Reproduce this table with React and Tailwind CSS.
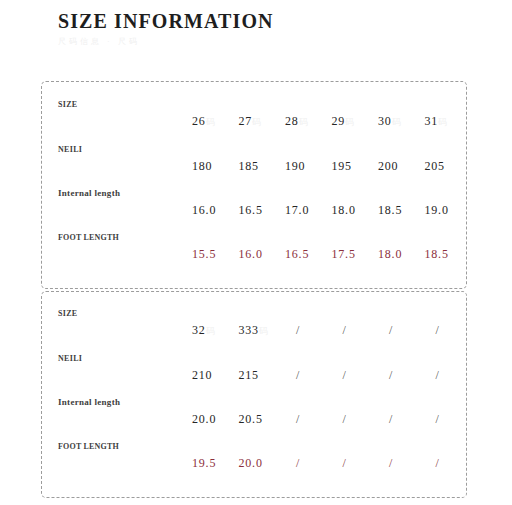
import React from "react";

const serif = { fontFamily: '"Liberation Serif", "Times New Roman", serif' };

const box1 = [
  { label: "SIZE", cls: "text-[8px] tracking-[0.3px]", vals: ["26", "27", "28", "29", "30", "31"], ghost: true },
  { label: "NEILI", cls: "text-[8px] tracking-[0.3px]", vals: ["180", "185", "190", "195", "200", "205"] },
  { label: "Internal length", cls: "text-[9px] tracking-[0.3px]", vals: ["16.0", "16.5", "17.0", "18.0", "18.5", "19.0"] },
  { label: "FOOT LENGTH", cls: "text-[8px] tracking-[0.2px]", vals: ["15.5", "16.0", "16.5", "17.5", "18.0", "18.5"], red: true },
];

const box2 = [
  { label: "SIZE", cls: "text-[8px] tracking-[0.3px]", vals: ["32", "333", "/", "/", "/", "/"], ghost: true },
  { label: "NEILI", cls: "text-[8px] tracking-[0.3px]", vals: ["210", "215", "/", "/", "/", "/"] },
  { label: "Internal length", cls: "text-[9px] tracking-[0.3px]", vals: ["20.0", "20.5", "/", "/", "/", "/"] },
  { label: "FOOT LENGTH", cls: "text-[8px] tracking-[0.2px]", vals: ["19.5", "20.0", "/", "/", "/", "/"], red: true },
];

function Row({ row, last }) {
  return (
    <div className={last ? "" : "mb-[10px]"}>
      <div className={`leading-[17px] font-bold text-[#404040] ${row.cls}`}>{row.label}</div>
      <div className="grid grid-cols-[repeat(6,46.5px)] pl-[134px] leading-[17px] text-[12px] tracking-[0.8px]">
        {row.vals.map((v, i) =>
          v === "/" ? (
            <span key={i} className={`pl-[11px] ${row.red ? "text-[#8a3a46]" : "text-[#555]"}`}>/</span>
          ) : (
            <span key={i} className={row.red ? "text-[#8c2f3c]" : "text-[#262626]"}>
              {v}
              {row.ghost && <span className="text-[#efefef] text-[9px]">码</span>}
            </span>
          )
        )}
      </div>
    </div>
  );
}

function Box({ rows, className }) {
  return (
    <div className={`ml-[41px] w-[426px] border border-dashed border-[#9c9c9c] rounded-[5px] pl-[16px] ${className}`}>
      {rows.map((r, i) => (
        <Row key={i} row={r} last={i === rows.length - 1} />
      ))}
    </div>
  );
}

export default function App() {
  return (
    <div className="w-[512px] h-[505px] bg-white overflow-hidden" style={serif}>
      <div className="pl-[58px] pt-[11px] h-[81px]">
        <div className="text-[20px] leading-[20px] font-bold tracking-[1.1px] text-[#1e1e1e]">SIZE INFORMATION</div>
        <div className="mt-[6px] text-[8px] leading-[10px] text-[#efefef] tracking-[3px]">尺码信息 · 尺码</div>
      </div>
      <Box rows={box1} className="h-[208px] pt-[14px]" />
      <Box rows={box2} className="mt-[2px] h-[207px] pt-[13px]" />
    </div>
  );
}
